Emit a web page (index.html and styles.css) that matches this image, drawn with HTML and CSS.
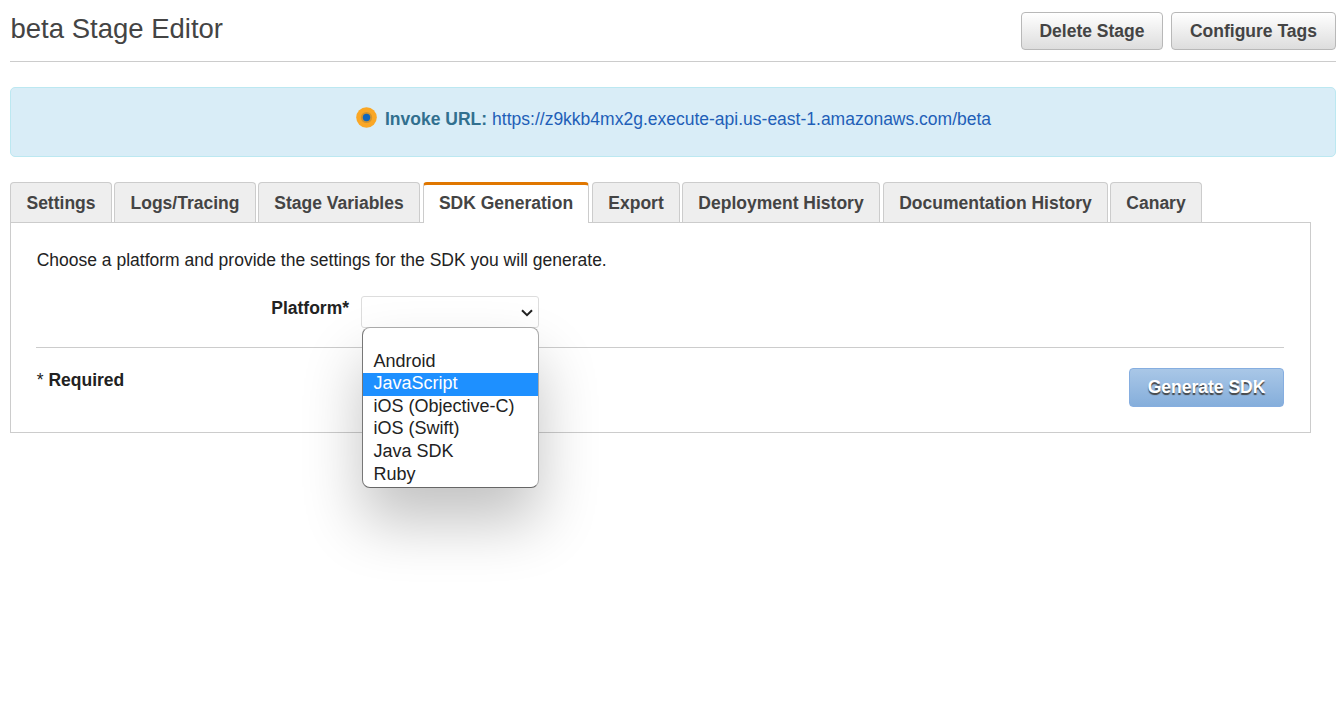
FILE: index.html
```html
<!DOCTYPE html>
<html lang="en">
<head>
<meta charset="utf-8">
<title>beta Stage Editor</title>
<link rel="stylesheet" href="styles.css">
</head>
<body>
<header class="header">
  <h1 class="title">beta Stage Editor</h1>
  <div class="actions">
    <button class="btn btn-delete">Delete Stage</button>
    <button class="btn btn-tags">Configure Tags</button>
  </div>
</header>
<div class="invoke">
  <svg class="dot" viewBox="0 0 22 22"><circle cx="10.5" cy="10.5" r="10.3" fill="#faa725"/><circle cx="10.5" cy="10.5" r="5.6" fill="#cf932f"/><circle cx="10.5" cy="10.5" r="3.7" fill="#1166bb"/></svg>
  <strong class="invoke-label">Invoke URL:</strong>
  <a class="invoke-url">https://z9kkb4mx2g.execute-api.us-east-1.amazonaws.com/beta</a>
</div>
<nav class="tabs">
  <div class="tab t1">Settings</div>
  <div class="tab t2">Logs/Tracing</div>
  <div class="tab t3">Stage Variables</div>
  <div class="tab t4 active">SDK Generation</div>
  <div class="tab t5">Export</div>
  <div class="tab t6">Deployment History</div>
  <div class="tab t7">Documentation History</div>
  <div class="tab t8">Canary</div>
</nav>
<main class="panel">
  <p class="intro">Choose a platform and provide the settings for the SDK you will generate.</p>
  <div class="field">
    <div class="label">Platform*</div>
    <div class="select">
      <svg class="chevron" viewBox="0 0 12 8"><path d="M1 1.2 6 6.2 11 1.2" fill="none" stroke="#222" stroke-width="2"/></svg>
      <div class="menu">
        <div class="option"></div>
        <div class="option">Android</div>
        <div class="option selected">JavaScript</div>
        <div class="option">iOS (Objective-C)</div>
        <div class="option">iOS (Swift)</div>
        <div class="option">Java SDK</div>
        <div class="option">Ruby</div>
      </div>
    </div>
  </div>
  <div class="footer">
    <div class="required">* <strong>Required</strong></div>
    <button class="generate">Generate SDK</button>
  </div>
</main>
</body>
</html>
```
FILE: styles.css
```css
* { box-sizing: border-box; }
body {
  margin: 0;
  min-height: 705px;
  padding: 0 7px 0 10px;
  background: #fff;
  color: #222;
  font: 17.5px/24px "Liberation Sans", Arial, sans-serif;
}
.header {
  display: flex;
  justify-content: space-between;
  height: 62px;
  border-bottom: 1px solid #ccc;
}
.title {
  margin: 13px 0 0;
  padding-left: 0.5px;
  font-size: 27.5px;
  font-weight: 400;
  line-height: 32px;
  color: #444;
}
.actions { display: flex; gap: 8px; margin-top: 12px; }
.btn {
  height: 38px;
  padding: 0;
  border: 1px solid #b8b8b8;
  border-radius: 4px;
  background: linear-gradient(#fff, #ddd);
  color: #444;
  font: bold 17.5px/34px "Liberation Sans", Arial, sans-serif;
}
.btn-delete { width: 142px; }
.btn-tags { width: 165px; }
.invoke {
  display: flex;
  height: 70px;
  margin-top: 25px;
  padding: 19px 0 0 345px;
  border: 1px solid #bce8f1;
  border-radius: 5px;
  background: #d9edf7;
}
.dot { width: 22px; height: 22px; margin-right: 7px; }
.invoke-label { margin-right: 5px; color: #31708f; }
.invoke-url { color: #1f5fb8; }
.tabs { display: flex; gap: 2px; height: 40px; margin-top: 25px; }
.tab {
  border: 1px solid #ccc;
  border-bottom: 0;
  border-radius: 4px 4px 0 0;
  background: #eee;
  color: #444;
  font-weight: bold;
  line-height: 40px;
  text-align: center;
}
.t1 { width: 102px; }
.t2 { width: 142px; }
.t3 { width: 162px; }
.t4 { width: 166px; margin: 0 1px; }
.t5 { width: 88px; }
.t6 { width: 198px; }
.t7 { width: 225px; margin-left: 1px; }
.t8 { width: 92px; }
.tab.active {
  height: 41px;
  border-top: 3px solid #e07700;
  background: #fff;
  line-height: 36px;
  z-index: 1;
}
.panel {
  width: 1301px;
  height: 211px;
  padding: 25px 26px 0 25px;
  border: 1px solid #ccc;
}
.intro { margin: 0; padding-left: 0.7px; }
.field { display: flex; height: 76px; padding-top: 24px; border-bottom: 1px solid #ccc; }
.label { width: 313px; font-weight: bold; text-align: right; }
.select {
  position: relative;
  width: 178px;
  height: 32px;
  margin-left: 12px;
  border: 1px solid #ddd;
  border-radius: 3px;
}
.chevron { position: absolute; right: 5px; top: 12px; width: 12px; height: 8px; }
.menu {
  position: absolute;
  left: 0;
  top: 30px;
  width: 177px;
  height: 161px;
  border: 1px solid #aaa;
  border-left-color: #777;
  border-bottom-color: #666;
  border-radius: 8px;
  background: #fff;
  box-shadow: 0 34px 60px rgba(0, 0, 0, .24);
  font-size: 18px;
}
.option { height: 22.6px; padding-left: 10.5px; line-height: 21px; }
.selected { background: #1e90ff; color: #fff; }
.footer { display: flex; justify-content: space-between; padding-top: 20px; }
.required { padding-left: 0.7px; }
.generate {
  width: 155px;
  height: 39px;
  padding: 0;
  border: 1px solid #86aee0;
  border-radius: 4px;
  background: linear-gradient(#a9c7e7, #85aedb);
  color: #fff;
  font: bold 17.5px/35px "Liberation Sans", Arial, sans-serif;
  text-shadow: 0 2px 1px #444;
}
```
